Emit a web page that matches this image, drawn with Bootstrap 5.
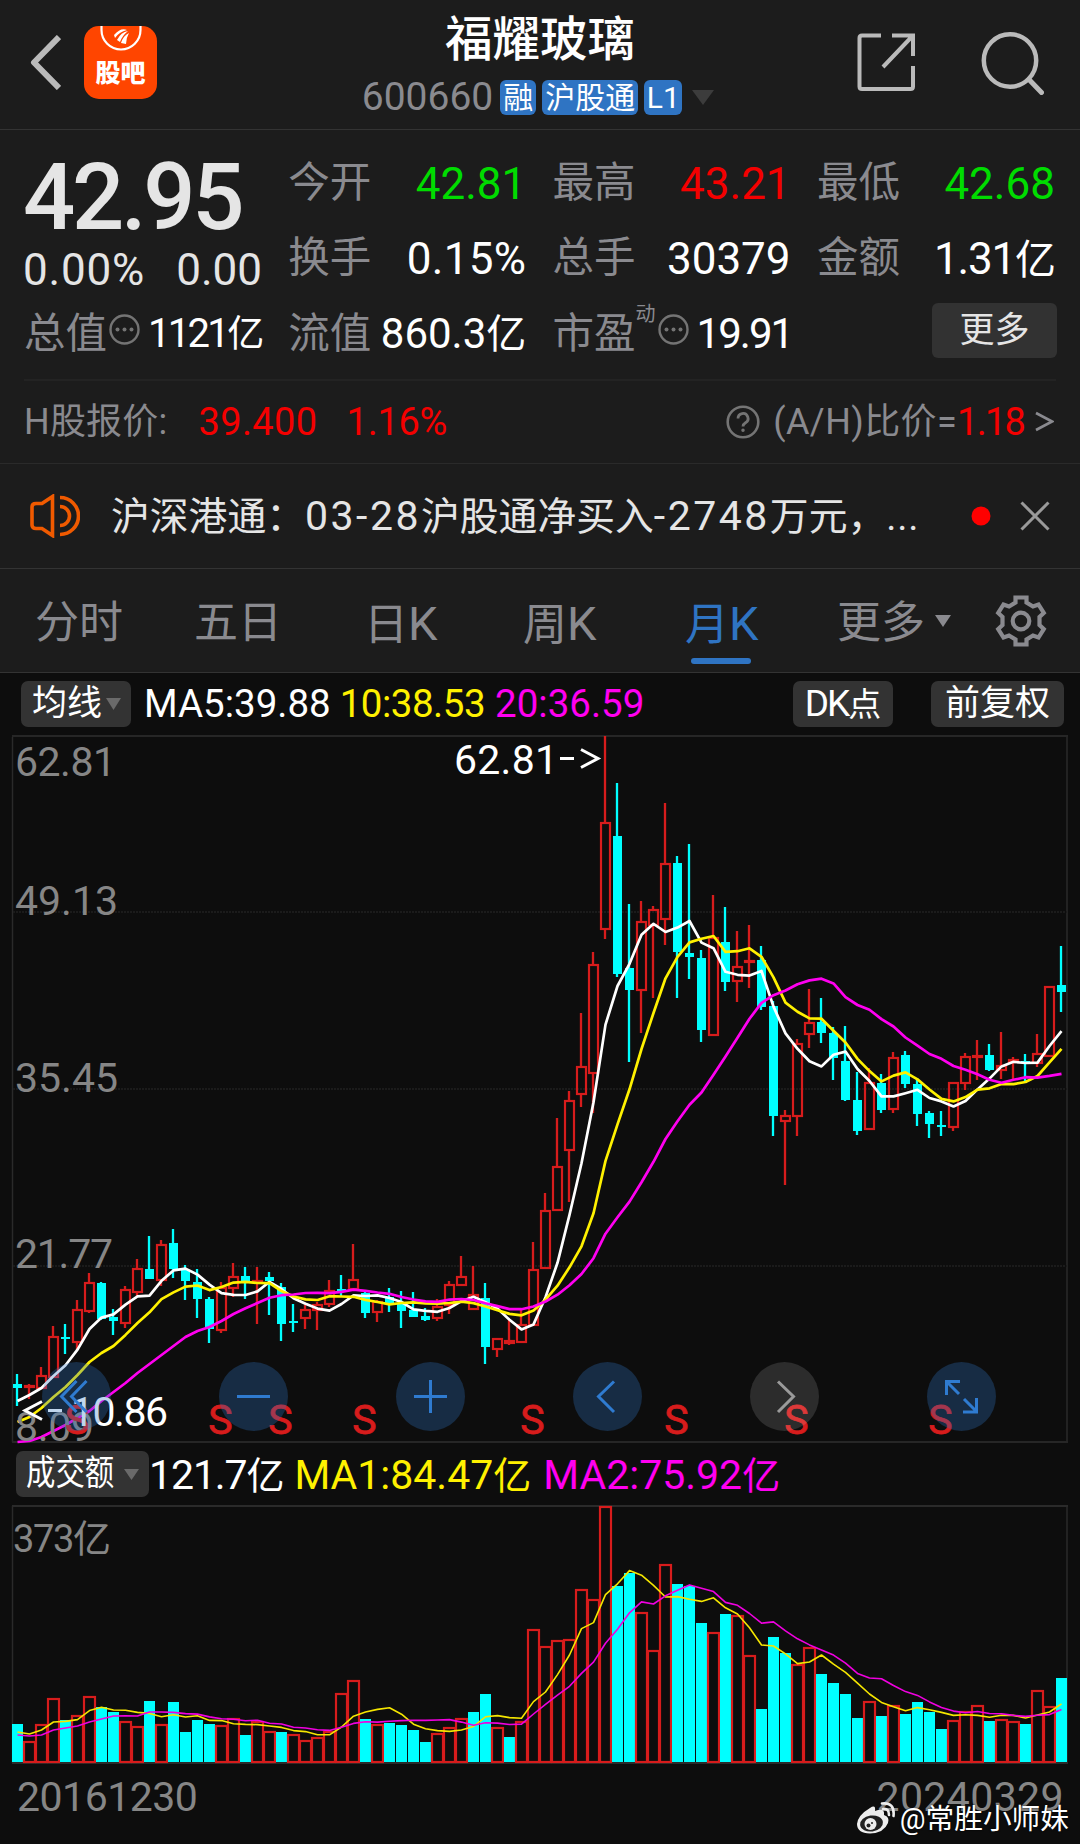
<!DOCTYPE html>
<html lang="zh-CN">
<head>
<meta charset="utf-8">
<meta name="viewport" content="width=device-width, initial-scale=1">
<title>福耀玻璃 600660</title>
<link href="https://cdn.jsdelivr.net/npm/bootstrap@5.3.0/dist/css/bootstrap.min.css" rel="stylesheet">
<style>
  :root { --cjk: "Noto Sans CJK SC"; }
  body { width: 1080px; height: 1844px; background: #0d0d0d; color: #fff; font-family: Roboto, var(--cjk), sans-serif; font-size: 44px; line-height: 1; overflow: hidden; white-space: nowrap; }
  svg { display: block; flex: none; }
  .panel { background: #1c1c1c; }
  .muted { color: #8a8a8f; }
  .up { color: #f40000; }
  .down { color: #00dc00; }
  .soft { color: #e5e5e5; }
  .topbar { height: 130px; border-bottom: 1px solid #333; padding: 0 36px 0 30px; }
  .back { margin-bottom: 5px; }
  .app-tile { width: 73px; height: 73px; border-radius: 15px; background: #ff4500; margin-left: 23px; margin-bottom: 5px; overflow: hidden; }
  .app-tile b { font-size: 25px; line-height: 25px; font-family: var(--cjk), sans-serif; font-weight: 900; margin-top: 5px; }
  .stock-name { font-size: 47.5px; line-height: 60px; margin-top: 10px; font-weight: 500; }
  .code-line { margin-top: 9px; margin-left: -4px; }
  .stock-code { font-size: 39px; line-height: 37px; margin-right: 7px; }
  .tag { background: #2f74c3; border-radius: 6px; height: 35px; line-height: 35px; font-size: 30px; text-align: center; margin-right: 6px; color: #fff; }
  .tag-1 { width: 36px; }
  .tag-2 { width: 38px; }
  .tag-3 { width: 96px; }
  .top-icon { margin-bottom: 4px; }
  .search-icon { margin-left: 64px; }
  .quote { height: 249px; padding: 16px 0 0 24px; display: grid; grid-template-columns: repeat(4, 238px); grid-template-rows: repeat(3, 75px); column-gap: 26.300px; }
  .last-price { grid-row: span 2; }
  .price-now { font-size: 92px; line-height: 101px; font-weight: 500; letter-spacing: -3.300px; margin-left: -1px; padding-top: 1px; }
  .price-chg { line-height: 45px; margin-left: -1px; }
  .wide-1 { letter-spacing: .8px; }
  .lbl { font-size: 41.5px; }
  .dots { margin: 0 8px 8px 2px; }
  .pe-sup { font-size: 20px; margin-top: -9px; }
  .cap-total { font-size: 40px; letter-spacing: -2.700px; }
  .cap-total span { font-size: 37px; letter-spacing: 0; }
  .cap-float { font-size: 42px; }
  .cap-float span { font-size: 40px; }
  .pe { font-size: 42px; letter-spacing: -2px; }
  .more-btn { width: 125px; height: 55px; border-radius: 6px; background: #323232; color: #e5e5e5; font-size: 35px; line-height: 55px; text-align: center; margin: -7px -2px 0 0; }
  .thin { height: 2px; margin: 0 24px; background: #232323; }
  .h-row { height: 83px; border-bottom: 1px solid #2a2a2a; padding: 0 26px 0 24px; font-size: 36px; }
  .h-row .num { font-size: 38px; }
  .news { height: 105px; border-bottom: 1px solid #333; padding: 0 30px; font-size: 38.800px; }
  .news .num { font-size: 41px; letter-spacing: 2.500px; }
  .news .etc { letter-spacing: .8px; }
  .periods { height: 104px; border-bottom: 1px solid #333; padding-left: 35px; font-size: 44px; }
  .periods .k { font-size: 47px; }
  .periods .tab { height: 103px; line-height: 109px; position: relative; }
  .periods .chosen { color: #2f74c3; }
  .periods .chosen::after { content: ""; position: absolute; left: 6px; bottom: 8px; width: 60px; height: 6px; border-radius: 3px; background: #2f74c3; }
  .ma-row { height: 57px; padding: 0 16px 0 21px; font-size: 38.500px; }
  .ma-row > * { margin-top: 6px; }
  .ma-row .chip { margin-top: 4px; }
  .chip { background: #333; border-radius: 7px; height: 46px; line-height: 46px; font-size: 35px; color: #fff; }
  .y { color: #fff100; }
  .m { color: #ff00f0; }
  .vol-row { height: 58px; padding-left: 16px; font-size: 41px; }
  .vol-row > span:not(.chip) { padding-top: 2px; }
  .vol-row .yi { font-size: 38px; }
  .narrow { display: inline-block; transform: scaleX(.84); transform-origin: left center; width: 92px; }
  .dates { height: 60px; color: #868686; font-size: 41px; padding: 0 16px 0 17px; }
  .tools { position: absolute; left: 42px; top: 632px; width: 954px; }
  .round { width: 69px; height: 69px; border-radius: 50%; background: rgba(47,116,197,.3); }
  .round.off { background: rgba(255,255,255,.13); }
  .credit { position: absolute; right: 11px; bottom: 9px; height: 34px; font-size: 28.700px; text-shadow: 0 0 2px #000; }
  .credit span { padding-top: 2px; }
</style>
</head>
<body class="position-relative">
<div class="panel">
  <header class="topbar d-flex align-items-center position-relative">
    <svg class="back" width="31" height="55" viewBox="0 0 31 55" fill="none" stroke="#bababa" stroke-width="6"><path d="M29 2 4 27.500 29 53" stroke-linejoin="round"/></svg>
    <div class="app-tile d-flex flex-column align-items-center">
      <svg width="44" height="28" viewBox="0 0 44 28"><path d="M2.500 0v4a19.500 19.500 0 0 0 39 0V0" fill="none" stroke="#fff" stroke-width="2.200"/><path d="M15 9Q22 1 28 4Q20 6 16 12ZM18 14Q22 6 29 5Q23 10 21 16ZM22 17Q24 10 30 7Q27 12 27 18Z" fill="#fff"/></svg>
      <b>股吧</b>
    </div>
    <div class="position-absolute top-0 start-0 w-100 d-flex flex-column align-items-center">
      <div class="stock-name">福耀玻璃</div>
      <div class="code-line d-flex align-items-center">
        <span class="stock-code muted">600660</span>
        <span class="tag tag-1">融</span>
        <span class="tag tag-3">沪股通</span>
        <span class="tag tag-2">L1</span>
        <svg class="ms-1" width="22" height="15" viewBox="0 0 22 15"><path d="M0 0h22L11 15z" fill="#3c3c3c"/></svg>
      </div>
    </div>
    <svg class="top-icon ms-auto" width="59" height="59" viewBox="0 0 59 59" fill="none" stroke="#bababa" stroke-width="4"><path d="M24 2.500H5Q2.500 2.500 2.500 5V53.500Q2.500 56 5 56H53.500Q56 56 56 53.500V33M35 2.500H56V23M55 3.500 26 34"/></svg>
    <svg class="top-icon search-icon" width="64" height="64" viewBox="0 0 64 64" fill="none" stroke="#bababa" stroke-width="4.500"><circle cx="30" cy="29.500" r="26.200"/><path d="M49 48.500 61.500 61.500" stroke-width="5" stroke-linecap="round"/></svg>
  </header>

  <section class="quote align-items-center">
    <div class="last-price soft align-self-start">
      <div class="price-now">42.95</div>
      <div class="price-chg d-flex justify-content-between"><span class="wide-1">0.00%</span><span>0.00</span></div>
    </div>
    <div class="d-flex justify-content-between"><span class="lbl muted">今开</span><span class="down">42.81</span></div>
    <div class="d-flex justify-content-between"><span class="lbl muted">最高</span><span class="up">43.21</span></div>
    <div class="d-flex justify-content-between"><span class="lbl muted">最低</span><span class="down">42.68</span></div>
    <div class="d-flex justify-content-between"><span class="lbl muted">换手</span><span style="letter-spacing:.3px">0.15%</span></div>
    <div class="d-flex justify-content-between"><span class="lbl muted">总手</span><span>30379</span></div>
    <div class="d-flex justify-content-between"><span class="lbl muted">金额</span><span style="letter-spacing:-1.200px">1.31<span class="fs-41" style="font-size:41px">亿</span></span></div>
    <div class="d-flex align-items-center">
      <span class="lbl muted">总值</span>
      <svg class="dots" width="31" height="31" viewBox="0 0 31 31" fill="#747474"><circle cx="15.500" cy="15.500" r="14" fill="none" stroke="#747474" stroke-width="2.400"/><circle cx="8.500" cy="15.500" r="2"/><circle cx="15.500" cy="15.500" r="2"/><circle cx="22.500" cy="15.500" r="2"/></svg>
      <span class="cap-total ms-auto">1121<span>亿</span></span>
    </div>
    <div class="d-flex justify-content-between"><span class="lbl muted">流值</span><span class="cap-float">860.3<span>亿</span></span></div>
    <div class="d-flex align-items-center">
      <span class="lbl muted">市盈</span><span class="pe-sup muted align-self-start">动</span>
      <svg class="dots" width="31" height="31" viewBox="0 0 31 31" fill="#747474"><circle cx="15.500" cy="15.500" r="14" fill="none" stroke="#747474" stroke-width="2.400"/><circle cx="8.500" cy="15.500" r="2"/><circle cx="15.500" cy="15.500" r="2"/><circle cx="22.500" cy="15.500" r="2"/></svg>
      <span class="pe ms-auto">19.91</span>
    </div>
    <div class="d-flex justify-content-end"><div class="more-btn">更多</div></div>
  </section>
  <div class="thin"></div>

  <section class="h-row d-flex align-items-center">
    <span class="muted" style="letter-spacing:.2px">H股报价:</span>
    <span class="up num" style="margin-left:31px;letter-spacing:.4px">39.400</span>
    <span class="up num" style="margin-left:29px;letter-spacing:-.3px">1.16%</span>
    <svg class="ms-auto" width="34" height="34" viewBox="0 0 34 34" fill="none" stroke="#747474" stroke-width="2.600"><circle cx="17" cy="17" r="15.300"/><path d="M12 13.500a5 5 0 1 1 7.500 4.300Q17 19.300 17 21.500" stroke-width="2.800"/><circle cx="17" cy="25.300" r="1" stroke-width="1.500" fill="#747474"/></svg>
    <span class="muted" style="margin-left:13px;letter-spacing:.4px">(A/H)比价=</span><span class="up num" style="letter-spacing:-1.800px">1.18</span>
    <svg width="19" height="22" style="margin-left:11px" viewBox="0 0 19 22" fill="none" stroke="#8a8a8f" stroke-width="2.600"><path d="M1 2 17 10.500 1 19"/></svg>
  </section>

  <section class="news soft d-flex align-items-center">
    <svg width="50" height="44" viewBox="0 0 50 44" fill="none" stroke="#f05a00" stroke-width="3.600"><path d="M2 13Q2 9.500 6 9.500H12L22.500 2.500V41.500L12 34.500H6Q2 34.500 2 31Z"/><path d="M30 3.500A18.500 18.500 0 0 1 30 40.500M30 12.500A9.500 9.500 0 0 1 30 31.500"/></svg>
    <span style="margin-left:31px">沪深港通：<span class="num">03-28</span>沪股通净买入<span class="num">-2748</span>万元，<span class="etc">...</span></span>
    <svg class="ms-auto" width="20" height="20" viewBox="0 0 20 20"><circle cx="10" cy="10" r="9.500" fill="#f00"/></svg>
    <svg width="30" height="30" style="margin-left:29px" viewBox="0 0 30 30" stroke="#9a9a9a" stroke-width="3"><path d="M1.500 1.500 28.500 28.500M28.500 1.500 1.500 28.500"/></svg>
  </section>

  <nav class="periods muted d-flex align-items-center">
    <span class="tab" style="width:159px">分时</span>
    <span class="tab" style="width:170px">五日</span>
    <span class="tab" style="width:159px">日<span class="k">K</span></span>
    <span class="tab" style="width:162px">周<span class="k">K</span></span>
    <span class="tab chosen" style="width:152px">月<span class="k">K</span></span>
    <span class="tab">更多</span>
    <svg width="16" height="12" style="margin-left:10px" viewBox="0 0 16 12"><path d="M0 0h16L8 12z" fill="#8a8a8f"/></svg>
    <svg width="52" height="52" style="margin-left:44px" viewBox="0 0 52 52" fill="none" stroke="#8a8a8f" stroke-width="4.200"><path d="M20.500 2.500H31.500V7.500L38 11.500L43.500 9.500L48.800 18L44.500 22V30L48.800 34L43.500 42.500L38 40.500L31.500 44.500V49.500H20.500V44.500L14 40.500L8.500 42.500L3.200 34L7.500 30V22L3.200 18L8.500 9.500L14 11.500L20.500 7.500Z"/><circle cx="26" cy="26" r="8.300"/></svg>
  </nav>
</div>

<div class="ma-row d-flex align-items-center">
  <span class="chip d-flex align-items-center" style="width:110px;padding-left:11px">均线<svg width="15" height="12" style="margin-left:4px" viewBox="0 0 15 12"><path d="M0 0h15L7.500 12z" fill="#6a6a6a"/></svg></span>
  <span style="margin-left:13px">MA5:39.88</span>
  <span class="y" style="margin-left:9px;letter-spacing:-.5px">10:38.53</span>
  <span class="m" style="margin-left:10px">20:36.59</span>
  <span class="chip text-center ms-auto" style="width:100px"><span style="font-size:37px;letter-spacing:-2px">DK</span><span style="font-size:33px">点</span></span>
  <span class="chip text-center" style="width:133px;margin-left:38px">前复权</span>
</div>

<div class="position-relative" style="height:715px">
  <svg id="kline" width="1080" height="715" viewBox="0 730 1080 715" font-size="41" font-family="Roboto, sans-serif"></svg>
  <div class="tools d-flex justify-content-between">
    <span class="round"><svg width="69" height="69" viewBox="0 0 69 69" fill="none" stroke="#2f7bd0" stroke-width="3"><path d="M34.500 19 19.500 34.500 34.500 50M44.500 19 29.500 34.500 44.500 50"/></svg></span>
    <span class="round"><svg width="69" height="69" viewBox="0 0 69 69" stroke="#2f7bd0" stroke-width="3"><path d="M18 34.500H51"/></svg></span>
    <span class="round"><svg width="69" height="69" viewBox="0 0 69 69" stroke="#2f7bd0" stroke-width="3"><path d="M18 34.500H51M34.500 18V51"/></svg></span>
    <span class="round"><svg width="69" height="69" viewBox="0 0 69 69" fill="none" stroke="#2f7bd0" stroke-width="3"><path d="M41 19.500 25.500 34.500 41 50"/></svg></span>
    <span class="round off"><svg width="69" height="69" viewBox="0 0 69 69" fill="none" stroke="#9a9a9a" stroke-width="3"><path d="M28 19.500 43.500 34.500 28 50"/></svg></span>
    <span class="round"><svg width="69" height="69" viewBox="0 0 69 69" fill="none" stroke="#2f7bd0" stroke-width="3"><path d="M33 19.500H19.500V33M20 20 32 32M36 50H49.500V36M49 49 37 37"/></svg></span>
  </div>
</div>

<div class="vol-row d-flex align-items-center">
  <span class="chip d-flex align-items-center" style="width:133px;padding-left:10px"><span class="narrow">成交额</span><svg width="15" height="11" style="margin-left:6px" viewBox="0 0 15 11"><path d="M0 0h15L7.500 11z" fill="#6a6a6a"/></svg></span>
  <span style="letter-spacing:-1.100px">121.7<span class="yi">亿</span></span>
  <span class="y" style="margin-left:11px">MA1:84.47<span class="yi">亿</span></span>
  <span class="m" style="margin-left:12px">MA2:75.92<span class="yi">亿</span></span>
</div>
<svg id="volume" width="1080" height="264" viewBox="0 1503 1080 264" font-size="38" font-family="Roboto, 'Noto Sans CJK SC', sans-serif"></svg>
<div class="dates d-flex align-items-center justify-content-between"><span style="letter-spacing:-.5px">20161230</span><span style="letter-spacing:.4px">20240329</span></div>

<div class="credit d-flex align-items-center">
  <svg width="39" height="32" style="margin-right:5px" viewBox="0 0 39 32"><path d="M14 6Q20 2 19 9Q29 5 28 13Q34 15 32 21Q28 31 14 31.500Q1 31 1 22Q2 13 14 6Z" fill="#eee"/><ellipse cx="15.500" cy="21.500" rx="11.500" ry="8" fill="#222" transform="rotate(-8 15.500 21.500)"/><circle cx="14.500" cy="22" r="6" fill="#eee"/><circle cx="12.500" cy="23.500" r="2" fill="#222"/><circle cx="16" cy="21" r="1" fill="#222"/><path d="M27 7Q33 6 33 13M26 1.500Q39 0 37.500 14" fill="none" stroke="#eee" stroke-width="2.600" stroke-linecap="round"/></svg>
  <span>@常胜小师妹</span>
</div>

<script src="https://cdn.jsdelivr.net/npm/bootstrap@5.3.0/dist/js/bootstrap.bundle.min.js"></script>
<script>
// Monthly candles: direction, high, body top, body bottom, low (chart units)
const candles = `c 1374 1384 1388 1406|r 1384 1385 1388 1399|r 1367 1375 1389 1389|r 1326 1336 1378 1378|c 1324 1337 1339 1354|r 1300 1309 1343 1350|r 1273 1282 1312 1313|c 1282 1283 1319 1320|c 1309 1317 1321 1335|r 1286 1289 1324 1328|r 1259 1268 1293 1296|c 1236 1269 1279 1279|r 1240 1244 1281 1286|c 1229 1243 1269 1278|c 1265 1270 1281 1300|c 1269 1282 1299 1318|c 1297 1299 1329 1343|r 1282 1287 1331 1333|r 1263 1276 1289 1297|c 1267 1276 1282 1299|r 1267 1280 1283 1324|c 1272 1277 1281 1315|c 1283 1287 1324 1341|c 1304 1321 1323 1332|r 1305 1309 1319 1329|r 1302 1304 1311 1330|r 1280 1290 1305 1307|c 1275 1289 1291 1297|r 1244 1279 1290 1290|c 1290 1293 1313 1318|r 1300 1301 1313 1322|c 1288 1297 1304 1312|c 1291 1304 1311 1328|c 1292 1310 1317 1317|c 1308 1316 1320 1321|r 1299 1306 1319 1321|r 1281 1284 1306 1314|r 1256 1276 1286 1286|r 1266 1294 1310 1310|c 1283 1298 1347 1364|r 1338 1338 1350 1357|r 1320 1340 1344 1345|r 1310 1324 1343 1343|r 1242 1269 1326 1326|r 1193 1210 1269 1269|r 1118 1166 1211 1211|r 1091 1100 1151 1202|r 1013 1066 1095 1107|r 952 964 1074 1113|r 736 822 930 939|c 783 836 974 977|c 904 968 990 1062|r 901 921 991 1033|r 906 909 926 998|r 803 863 920 945|c 856 863 952 998|c 844 953 957 979|c 950 958 1030 1042|r 895 937 1036 1036|c 907 942 982 991|r 931 966 982 1002|r 925 960 963 988|c 946 960 1007 1010|c 1001 1006 1116 1136|r 1110 1115 1122 1185|r 1039 1043 1117 1136|r 989 1022 1035 1048|c 998 1022 1033 1043|c 1027 1033 1058 1080|c 1026 1061 1100 1101|c 1072 1100 1131 1135|r 1068 1082 1130 1130|c 1074 1083 1110 1113|r 1052 1057 1110 1113|c 1051 1055 1084 1088|c 1078 1084 1114 1126|c 1111 1113 1124 1138|c 1111 1125 1127 1136|r 1082 1082 1128 1131|r 1053 1056 1084 1090|r 1040 1055 1057 1080|c 1044 1055 1070 1071|r 1032 1065 1071 1079|r 1057 1059 1063 1080|c 1054 1061 1063 1082|r 1034 1053 1064 1067|r 986 986 1057 1057|c 946 985 992 1012`
  .split('|').map(s => { const [t, ...v] = s.split(' '); return [t, ...v.map(Number)]; });
// Turnover bars: direction + height above the base line
const turnover = 'c38 r21 r38 r64 c42 r47 r66 c55 c50 r41 r36 c61 r38 c60 c30 c42 c38 r37 r44 c27 r41 r31 c30 r28 r22 r25 r31 r69 r82 c43 r38 c39 c37 c32 c20 r29 r35 r44 c50 c68 r35 c25 r41 r133 r116 r122 r123 r173 r163 r256 c176 c189 r150 r112 r198 c178 c176 c139 r130 c148 r147 r107 c53 c125 c109 r98 r115 c88 c79 c68 c44 r61 c46 r57 c48 c60 c50 c33 r42 r51 r57 c41 r43 r41 c38 r72 r56 c84'
  .split(' ').map(s => [s[0], 1762 - Number(s.slice(1))]);

const X = i => 17 + 12 * i, RED = '#d71c1c', CYAN = '#00ffff';
// Moving average; `lead` supplies the points that depend on months left of the window
function average(values, n, lead) {
  return values.map((_, i) => i < lead.length ? lead[i] : values.slice(i - n + 1, i + 1).reduce((a, b) => a + b) / n);
}
const line = (pts, color, w, dx = 0) => `<polyline fill="none" stroke="${color}" stroke-width="${w}" stroke-linejoin="round" points="${pts.map((y, i) => (X(i) + dx) + ',' + y.toFixed(1)).join(' ')}"/>`;
const label = (x, y, w, s, fill) => `<text x="${x}" y="${y}" textLength="${w}" lengthAdjust="spacing" fill="${fill}">${s}</text>`;

let k = '<path d="M12.500 737V1442M1067 737V1442" stroke="#2a2a2a" stroke-width="1.500"/><path d="M12 736H1068M12 1442H1068" stroke="#262626" stroke-width="2"/>';
k += '<path d="M13 912H1067M13 1089H1067M13 1266H1067" stroke="#1b1b1b" stroke-width="2" stroke-dasharray="2 1"/>';
candles.forEach(([t, hi, top, bot, lo], i) => {
  const x = X(i);
  if (t === 'c') k += `<path d="M${x} ${hi}V${lo}" stroke="${CYAN}" stroke-width="2.300"/><rect x="${x - 4}" y="${top}" width="9" height="${Math.max(2, bot - top)}" fill="${CYAN}"/>`;
  else k += `<path d="M${x} ${hi}V${top + 1}M${x} ${bot - 1}V${lo}" stroke="${RED}" stroke-width="2.300"/><rect x="${x - 4}" y="${top + 1}" width="9" height="${Math.max(1, bot - top - 2)}" fill="none" stroke="${RED}" stroke-width="2.200"/>`;
});
const close = candles.map(c => c[0] === 'c' ? c[3] : c[2] + 1);
k += line(average(close, 5, [1401, 1395, 1388, 1376]), '#fff', 2.7, .5);
k += line(average(close, 10, [1422, 1417, 1408, 1397, 1387, 1375, 1362, 1353, 1346]), '#fff100', 2.7, .5);
k += line(average(close, 20, [1442, 1441, 1437, 1431, 1425, 1418, 1411, 1401, 1392, 1383, 1373, 1364, 1355, 1346, 1337, 1331, 1327, 1321, 1314]), '#ff00f0', 2.7, .5);
k += label(15, 776, 101, '62.81', '#868686') + label(15, 915, 103, '49.13', '#868686') + label(15, 1092, 103, '35.45', '#868686') + label(15, 1268, 98, '21.77', '#868686');
k += label(15, 1441, 79, '8.09', '#868686');
[77, 220.5, 280.5, 364.5, 532.5, 676.5, 796.5, 940.5].forEach(x => k += `<text x="${x}" y="1434" text-anchor="middle" fill="${RED}" stroke="${RED}" stroke-width=".8">S</text>`);
k += label(454, 774, 104, '62.81', '#fff') + '<path d="M560 758.500H574" stroke="#fff" stroke-width="3"/><path d="M581 749.500 598 758.500 581 767.500" fill="none" stroke="#fff" stroke-width="3"/>';
k += label(71, 1426, 97, '10.86', '#fff') + '<path d="M48 1410.500H62" stroke="#fff" stroke-width="3"/><path d="M42 1401.500 25 1410.500 42 1419.500" fill="none" stroke="#fff" stroke-width="3"/>';
document.getElementById('kline').innerHTML = k;

let v = '<path d="M12.500 1506V1763M1067 1506V1763" stroke="#2a2a2a" stroke-width="1.500"/><path d="M12 1506H1068M12 1763H1068" stroke="#2a2a2a" stroke-width="2"/>';
v += '<text x="13" y="1552" fill="#868686" textLength="98">373亿</text>';
turnover.forEach(([t, y], i) => {
  const x = X(i);
  if (t === 'c') v += `<rect x="${x - 5}" y="${y}" width="11" height="${1762 - y}" fill="${CYAN}"/>`;
  else v += `<rect x="${x - 5}" y="${y + 1}" width="11" height="${1761 - y}" fill="none" stroke="${RED}" stroke-width="2.200"/>`;
});
const amt = turnover.map(t => t[1]);
v += line(average(amt, 5, [1732, 1734, 1730, 1722]), '#f5e600', 1.6, .5);
v += line(average(amt, 10, [1735, 1736, 1735, 1730, 1728, 1726, 1722, 1719, 1716]), '#f000e0', 1.6, .5);
document.getElementById('volume').innerHTML = v;
</script>
</body>
</html>
